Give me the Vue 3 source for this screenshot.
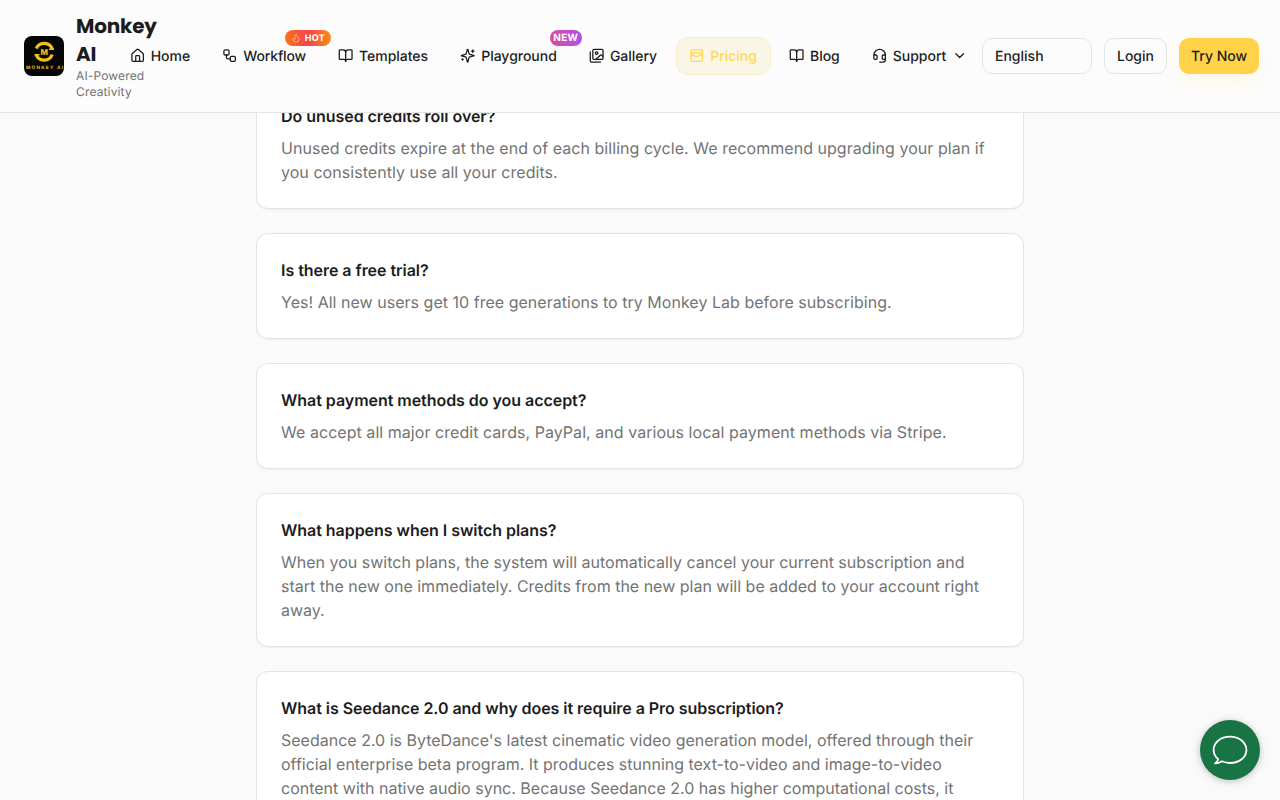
<script setup>
import { ref } from "vue";

const navItems = ref([
    { label: "Home", icon: "home" },
    { label: "Workflow", icon: "workflow", badge: "HOT" },
    { label: "Templates", icon: "book" },
    { label: "Playground", icon: "sparkles", badge: "NEW" },
    { label: "Gallery", icon: "gallery" },
    { label: "Pricing", icon: "pricing", active: true },
    { label: "Blog", icon: "book" },
    { label: "Support", icon: "headset", arrow: true },
]);

const icons = {
    home: [
        "M15 21v-8a1 1 0 0 0-1-1h-4a1 1 0 0 0-1 1v8",
        "M3 10a2 2 0 0 1 .709-1.528l7-6a2 2 0 0 1 2.582 0l7 6A2 2 0 0 1 21 10v9a2 2 0 0 1-2 2H5a2 2 0 0 1-2-2z",
    ],
    workflow: [
        "M5 3h4a2 2 0 0 1 2 2v4a2 2 0 0 1-2 2H5a2 2 0 0 1-2-2V5a2 2 0 0 1 2-2z",
        "M7 11v4a2 2 0 0 0 2 2h4",
        "M15 13h4a2 2 0 0 1 2 2v4a2 2 0 0 1-2 2h-4a2 2 0 0 1-2-2v-4a2 2 0 0 1 2-2z",
    ],
    book: [
        "M12 7v14",
        "M3 18a1 1 0 0 1-1-1V4a1 1 0 0 1 1-1h5a4 4 0 0 1 4 4 4 4 0 0 1 4-4h5a1 1 0 0 1 1 1v13a1 1 0 0 1-1 1h-6a3 3 0 0 0-3 3 3 3 0 0 0-3-3z",
    ],
    sparkles: [
        "M9.937 15.5A2 2 0 0 0 8.5 14.063l-6.135-1.582a.5.5 0 0 1 0-.962L8.5 9.936A2 2 0 0 0 9.937 8.5l1.582-6.135a.5.5 0 0 1 .963 0L14.063 8.5A2 2 0 0 0 15.5 9.937l6.135 1.581a.5.5 0 0 1 0 .964L15.5 14.063a2 2 0 0 0-1.437 1.437l-1.582 6.135a.5.5 0 0 1-.963 0z",
        "M20 3v4",
        "M22 5h-4",
        "M4 17v2",
        "M5 18H3",
    ],
    gallery: [
        "M18 22H4a2 2 0 0 1-2-2V6",
        "m22 13-1.296-1.296a2.41 2.41 0 0 0-3.408 0L11 18",
        "M14 8a2 2 0 1 1-4 0 2 2 0 0 1 4 0z",
        "M8 2h12a2 2 0 0 1 2 2v12a2 2 0 0 1-2 2H8a2 2 0 0 1-2-2V4a2 2 0 0 1 2-2z",
    ],
    pricing: [
        "M5 3h14a2 2 0 0 1 2 2v14a2 2 0 0 1-2 2H5a2 2 0 0 1-2-2V5a2 2 0 0 1 2-2z",
        "M3 11h3c.8 0 1.6.3 2.1.9l1.1.9c1.6 1.6 4.1 1.6 5.7 0l1.1-.9c.5-.5 1.3-.9 2.1-.9H21",
        "M3 7.5h18",
    ],
    headset: [
        "M3 11h3a2 2 0 0 1 2 2v3a2 2 0 0 1-2 2H5a2 2 0 0 1-2-2v-5a9 9 0 1 1 18 0v5a2 2 0 0 1-2 2h-1a2 2 0 0 1-2-2v-3a2 2 0 0 1 2-2h3",
        "M21 16v2a4 4 0 0 1-4 4h-5",
    ],
};

const faqs = ref([
    {
        q: "Do unused credits roll over?",
        a: "Unused credits expire at the end of each billing cycle. We recommend upgrading your plan if you consistently use all your credits.",
    },
    {
        q: "Is there a free trial?",
        a: "Yes! All new users get 10 free generations to try Monkey Lab before subscribing.",
    },
    {
        q: "What payment methods do you accept?",
        a: "We accept all major credit cards, PayPal, and various local payment methods via Stripe.",
    },
    {
        q: "What happens when I switch plans?",
        a: "When you switch plans, the system will automatically cancel your current subscription and start the new one immediately. Credits from the new plan will be added to your account right away.",
    },
    {
        q: "What is Seedance 2.0 and why does it require a Pro subscription?",
        a: "Seedance 2.0 is ByteDance's latest cinematic video generation model, offered through their official enterprise beta program. It produces stunning text-to-video and image-to-video content with native audio sync. Because Seedance 2.0 has higher computational costs, it",
    },
]);
</script>

<template>
    <div class="page">
        <header class="header">
            <div class="brand">
                <svg class="logo" viewBox="0 0 40 40">
                    <rect width="40" height="40" rx="8" fill="#050505" />
                    <g fill="none" stroke="#f2c01d">
                        <path d="M12.3 12.5A8.6 8.6 0 0 1 28.4 13.4" stroke-width="3.2" />
                        <path d="M28.2 18.5A8.6 8.6 0 0 1 12 18.2" stroke-width="3.2" />
                        <path d="M10.5 18.8h5M25 13.2h5" stroke-width="1.6" />
                    </g>
                    <text x="20.2" y="19.2" class="logo-m">M</text>
                    <text x="20.5" y="33" class="logo-name" textLength="37">MONKEY AI</text>
                </svg>
                <div class="brand-text">
                    <span class="brand-name">Monkey<br />AI</span>
                    <span class="brand-sub">AI-Powered Creativity</span>
                </div>
            </div>
            <nav class="nav">
                <a
                    v-for="item in navItems"
                    :key="item.label"
                    class="nav-item"
                    :class="{ active: item.active }"
                >
                    <svg class="icon" viewBox="0 0 24 24">
                        <path v-for="d in icons[item.icon]" :key="d" :d="d" />
                    </svg>
                    <span class="label" :class="item.icon">{{ item.label }}</span>
                    <svg v-if="item.arrow" class="icon arrow" viewBox="0 0 24 24">
                        <path d="m6 9 6 6 6-6" />
                    </svg>
                    <span
                        v-if="item.badge"
                        class="badge"
                        :class="item.badge.toLowerCase()"
                    >
                        <svg v-if="item.badge === 'HOT'" class="flame" viewBox="0 0 24 24">
                            <path
                                d="M8.5 14.5A2.5 2.5 0 0 0 11 12c0-1.38-.5-2-1-3-1.072-2.143-.224-4.054 2-6 .5 2.5 2 4.9 4 6.5 2 1.6 3 3.5 3 5.5a7 7 0 1 1-14 0c0-1.153.433-2.294 1-3a2.5 2.5 0 0 0 2.5 2.5z"
                            />
                        </svg>
                        {{ item.badge }}
                    </span>
                </a>
            </nav>
            <div class="actions">
                <div class="btn lang">English</div>
                <div class="btn login">Login</div>
                <div class="btn try">Try Now</div>
            </div>
        </header>

        <main class="faq-list">
            <section class="faq" v-for="(faq, i) in faqs" :key="i">
                <h3>{{ faq.q }}</h3>
                <p>{{ faq.a }}</p>
            </section>
        </main>

        <div class="chat">
            <svg viewBox="0 0 60 60">
                <path
                    d="M18.2 39.2C15.300 36.700 13.600 33.500 13.600 30C13.600 22.500 20.800 16.700 30 16.700S46.400 22.500 46.400 30 39.200 43 30 43C27 43 24.300 42.400 22 41.300C19.800 42.700 17.200 43.400 15 43.400C16.800 42.300 17.900 40.800 18.200 39.200Z"
                />
            </svg>
        </div>
    </div>
</template>

<style>
body {
    margin: 0;
    background: #fafafa;
}
</style>

<style scoped>
.page {
    position: relative;
    height: 100vh;
    overflow: hidden;
    background: #fafafa;
    color: #1c1c1c;
    font-family: Inter, "Liberation Sans", sans-serif;
    text-rendering: geometricPrecision;
}

.header {
    position: relative;
    z-index: 2;
    box-sizing: border-box;
    height: 113px;
    display: flex;
    align-items: center;
    padding: 0 21px 0 24px;
    background: #fcfcfc;
    border-bottom: 1px solid #e4e4e4;
}

.brand {
    display: flex;
    align-items: center;
    gap: 12px;
    width: 92px;
    flex-shrink: 0;
}

.logo {
    width: 40px;
    height: 40px;
    flex-shrink: 0;
}

.logo-m {
    font: 800 8px Inter, sans-serif;
    fill: #f2c01d;
    text-anchor: middle;
}

.logo-name {
    font: 800 4.6px Inter, sans-serif;
    fill: #d8b01c;
    text-anchor: middle;
}

.brand-text {
    display: flex;
    flex-direction: column;
    flex-shrink: 0;
    width: 76px;
}

.brand-name {
    font-family: Poppins, Inter, sans-serif;
    font-size: 20px;
    line-height: 28px;
    font-weight: 700;
    letter-spacing: -0.2px;
}

.brand-sub {
    font-size: 12px;
    line-height: 16px;
    color: #737373;
    letter-spacing: 0.15px;
}

.nav {
    display: flex;
    gap: 4.5px;
    flex: 1 1 0;
    min-width: 0;
}

.nav-item {
    position: relative;
    display: flex;
    flex-shrink: 0;
    align-items: center;
    box-sizing: border-box;
    gap: 5.5px;
    height: 38px;
    padding: 0 12.9px;
    border: 1px solid transparent;
    border-radius: 12px;
    font-size: 14px;
    font-weight: 500;
    letter-spacing: -0.02px;
    white-space: nowrap;
}

.label {
    line-height: 36px;
    margin-top: 2px;
}

.label.workflow {
    letter-spacing: -0.15px;
}

.nav-item.active {
    color: #ffd656;
    background: #faf6e6;
    border-color: #faebc8;
}

.icon {
    width: 15.3px;
    height: 15.3px;
    flex-shrink: 0;
    fill: none;
    stroke: currentColor;
    stroke-width: 2;
    stroke-linecap: round;
    stroke-linejoin: round;
}

.badge {
    position: absolute;
    top: -8px;
    right: -12px;
    display: flex;
    align-items: center;
    justify-content: center;
    box-sizing: border-box;
    height: 16px;
    border-radius: 8px;
    color: #fff;
    font-size: 9px;
    line-height: 17px;
    font-weight: 700;
    letter-spacing: 0.2px;
}

.badge.hot {
    width: 46px;
    gap: 4px;
    background: linear-gradient(90deg, #f97316, #f4444a 50%, #f98c16);
}

.badge.new {
    width: 32px;
    font-size: 10px;
    background: linear-gradient(90deg, #e0489f, #a855f0);
}

.flame {
    width: 10px;
    height: 10px;
    fill: none;
    stroke: #ffc0a0;
    stroke-width: 2;
}

.actions {
    display: flex;
    flex-shrink: 0;
    gap: 12px;
}

.btn {
    box-sizing: border-box;
    height: 36px;
    padding: 0 12px;
    border: 1px solid #e4e4e4;
    border-radius: 10px;
    font-size: 14px;
    line-height: 36px;
    font-weight: 500;
    white-space: nowrap;
}

.lang {
    width: 110px;
}

.login {
    width: 63px;
}

.try {
    width: 80px;
    padding: 0 11px;
    border-color: #ffd24a;
    background: #ffd24a;
    box-shadow: 0 8px 18px rgba(255, 210, 74, 0.13);
}

.faq-list {
    display: flex;
    flex-direction: column;
    gap: 24px;
    width: 768px;
    margin: -34px auto 0;
}

.faq {
    padding: 24px;
    background: #fff;
    border: 1px solid #e4e4e4;
    border-radius: 12px;
    box-shadow: 0 1px 2px rgba(0, 0, 0, 0.05);
}

.faq h3 {
    margin: 0 0 8px;
    font-size: 16px;
    line-height: 24px;
    font-weight: 600;
    letter-spacing: -0.04px;
}

.faq p {
    margin: 0;
    font-size: 16px;
    line-height: 24px;
    color: #737373;
}

.faq:nth-child(1) p,
.faq:nth-child(3) p {
    letter-spacing: 0.045px;
}

.faq:nth-child(2) p {
    letter-spacing: 0.025px;
}

.chat {
    position: fixed;
    right: 20px;
    bottom: 20px;
    width: 60px;
    height: 60px;
    border-radius: 50%;
    background: #187445;
    box-shadow: 0 1px 6px rgba(0, 0, 0, 0.16), 0 2px 12px rgba(0, 0, 0, 0.1);
}

.chat svg {
    display: block;
    fill: none;
    stroke: #fff;
    stroke-width: 1.8;
    stroke-linejoin: round;
}
</style>
